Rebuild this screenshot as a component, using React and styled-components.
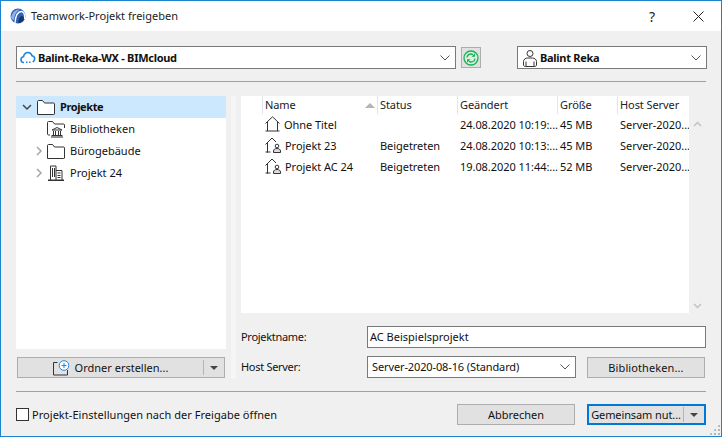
import React from 'react';
import styled, { createGlobalStyle } from 'styled-components';

const Global = createGlobalStyle`
  html, body { margin: 0; padding: 0; background: #f0f0f0; }
  * { box-sizing: border-box; }
`;

const Dialog = styled.div`
  width: 722px; height: 437px; overflow: hidden; position: relative;
  border: 1px solid #1a84d0;
  background: #f0f0f0;
  font-family: "Noto Sans", "Open Sans", sans-serif;
  font-size: 11px; color: #111;
  display: flex; flex-direction: column;
`;
const TitleBar = styled.div`
  height: 30px; flex: none; background: #fff;
  display: flex; align-items: center; padding: 0 0 0 9px;
`;
const TitleText = styled.span`
  font-size: 11px; color: #222; margin-left: 5px; flex: 1; letter-spacing: .02px; padding-bottom: 2px;
`;
const HelpGlyph = styled.span`
  font-size: 14px; width: 46px; text-align: center; color: #222;
`;
const CloseBtn = styled.span`
  width: 46px; display: flex; justify-content: center;
`;
const Body = styled.div`
  flex: 1; padding: 15px 15px 0; display: flex; flex-direction: column; min-height: 0;
`;
const TopRow = styled.div`
  display: flex; height: 23px; flex: none;
`;
const Select = styled.div`
  width: ${p => p.$w}px; height: ${p => p.$h || 23}px; flex: none;
  background: #fff; border: 1px solid #7a7a7a;
  display: flex; align-items: center; padding: 0 5px 0 ${p => p.$pl || 3}px;
  gap: ${p => p.$gap || 2}px;
  font-weight: ${p => p.$bold ? 700 : 400};
  letter-spacing: ${p => p.$bold ? '-.28px' : '-.12px'};
  margin-left: ${p => p.$ml || 0}px;
`;
const SelectText = styled.span`
  flex: 1; white-space: nowrap; overflow: hidden; padding-bottom: 1px;
`;
const SyncBtn = styled.div`
  width: 20px; height: 21px; margin: 1px 0 0 5px; flex: none;
  background: #e1e1e1; border: 1px solid #adadad;
  display: flex; align-items: center; justify-content: center;
`;
const Separator = styled.div`
  height: 1px; flex: none; background: #a0a0a0; margin: ${p => p.$m};
`;
const Main = styled.div`
  display: flex; height: 296px; flex: none;
`;
const LeftCol = styled.div`
  width: 210px; flex: none; display: flex; flex-direction: column;
`;
const Splitter = styled.div`
  width: 15px; flex: none; height: 283px; padding: 0 5px;
`;
const SplitterStrip = styled.div`
  height: 100%; background: #f5f5f5;
`;
const Tree = styled.div`
  height: 253px; flex: none; background: #fff;
`;
const TreeRow = styled.div`
  height: 22px; display: flex; align-items: center;
  background: ${p => p.$sel ? '#cce8ff' : 'transparent'};
  font-weight: ${p => p.$sel ? 700 : 400};
  letter-spacing: ${p => p.$sel ? '-.4px' : '0'};
  padding-left: ${p => p.$pl}px;
`;
const TreeLabel = styled.span`
  padding-bottom: 2px;
`;
const TreeIcon = styled.span`
  display: flex; margin-right: ${p => p.$mr || 5}px; flex: none;
`;
const Twisty = styled.span`
  display: flex; width: 12px; flex: none; margin-right: ${p => p.$mr || 2}px;
`;
const SplitButton = styled.div`
  height: 21px; flex: none; margin: ${p => p.$m || 0}; width: ${p => p.$w}px;
  background: #e1e1e1;
  border: ${p => p.$focus ? '2px solid #0078d7' : '1px solid #adadad'};
  display: flex; align-items: center; justify-content: center;
`;
const BtnMain = styled.span`
  flex: 1; display: flex; align-items: center; justify-content: center; gap: 5px;
  white-space: nowrap; letter-spacing: ${p => p.$ls || 0}px;
`;
const BtnArrowPart = styled.span`
  width: ${p => p.$w}px; flex: none; height: 15px; border-left: 1px solid #b5b5b5;
  display: flex; align-items: center; justify-content: center;
`;
const Triangle = styled.span`
  width: 0; height: 0; border-left: 4px solid transparent; border-right: 4px solid transparent;
  border-top: 4px solid #444;
`;
const RightCol = styled.div`
  flex: 1; display: flex; flex-direction: column; min-width: 0;
`;
const ListWrap = styled.div`
  height: 217px; flex: none; display: flex; background: #fff;
`;
const ListTable = styled.div`
  flex: 1; min-width: 0;
`;
const Cols = styled.div`
  display: grid; grid-template-columns: 21px 115px 80px 100px 60px 71px;
`;
const HeaderRow = styled(Cols)`
  height: 19px; align-items: stretch; padding-bottom: 1px;
`;
const Head = styled.div`
  border-left: ${p => p.$first ? '0' : '1px solid #e5e5e5'};
  padding: 0 0 2px 2px; display: flex; justify-content: space-between; align-items: center;
  white-space: nowrap; color: #222; letter-spacing: -.08px;
`;
const Row = styled(Cols)`
  height: 21px; align-items: center; white-space: nowrap;
`;
const Cell = styled.div`
  padding: 0 0 3px 3px; white-space: nowrap; display: flex; align-items: center; gap: 4px;
  letter-spacing: -.05px;
`;
const SortMark = styled.span`
  width: 0; height: 0; margin: 2px 2px 0 0;
  border-left: 5px solid transparent; border-right: 5px solid transparent;
  border-bottom: 5px solid #b4b4b4;
`;
const Scroll = styled.div`
  width: 17px; flex: none; background: #f0f0f0;
  display: flex; flex-direction: column; justify-content: space-between; align-items: center;
  padding: 25px 0 4px;
`;
const FormGrid = styled.div`
  margin-top: 13px; display: grid; grid-template-columns: 126px 209px 11px 118px; row-gap: 8px;
  align-items: center;
`;
const Label = styled.span`
  letter-spacing: -.3px; padding-bottom: 1px;
`;
const TextInput = styled.div`
  grid-column: 2 / span 3; height: 22px; background: #fff; border: 1px solid #7a7a7a;
  padding-left: 2px; line-height: 19px;
  margin-right: -1px;
`;
const Footer = styled.div`
  display: flex; align-items: center; margin-top: 12px; height: 21px;
`;
const Check = styled.span`
  width: 13px; height: 13px; background: #fff; border: 1px solid #333; flex: none; margin-right: 3px;
`;
const CheckLabel = styled.span`
  flex: 1; letter-spacing: .04px;
`;
const Grip = styled.div`
  position: absolute; right: 1px; bottom: 1px; width: 11px; height: 11px;
  background-image: radial-gradient(#b5b5b5 1px, transparent 1px);
  background-size: 4px 4px;
  clip-path: polygon(100% 0, 100% 100%, 0 100%);
`;

const Logo = () => (
  <svg width="16" height="16" viewBox="0 0 16 16">
    <circle cx="8" cy="8" r="7.500" fill="#2f62b8" />
    <path d="M1 9.500C2 4 6 1 10 1.500 7 3 4.500 6 4 12c-1.500 0-2.500-1-3-2.500z" fill="#8fb2e4" />
    <path d="M5 15C5.500 8 8 3.500 11.500 3.500 14 3.500 15 7 14.500 11" stroke="#fff" strokeWidth="1.300" fill="none" />
    <path d="M8 15c.5-4 2-7 4-7 1 0 2 1 2 3-1 2-3 4-6 4z" fill="#17366f" />
  </svg>
);
const X = () => (
  <svg width="11" height="11" viewBox="0 0 11 11"><path d="M.5.5l10 10M10.500.5l-10 10" stroke="#222" fill="none" /></svg>
);
const Chevron = () => (
  <svg width="10" height="6" viewBox="0 0 10 6" style={{ flex: 'none' }}><path d="M.5.5L5 5 9.500.5" stroke="#555" fill="none" /></svg>
);
const Cloud = () => (
  <svg width="16" height="13" viewBox="0 0 16 13"><path d="M4 11.500H3.500C1.800 11.500 1 10 1 8.500 1 7 2 6 3.500 5.800 4 3 6 1.500 8 1.500c2 0 3.500 1.500 4 3.300 1.500.2 2.700 1.400 2.700 3 0 1.500-.8 2.700-2 3.200" stroke="#1e87e6" strokeWidth="1.600" fill="none" /><rect x="6" y="10.500" width="1.500" height="1.500" fill="#1e87e6" /><rect x="9" y="10.500" width="1.500" height="1.500" fill="#1e87e6" /></svg>
);
const Sync = () => (
  <svg width="16" height="16" viewBox="0 0 16 16"><circle cx="8" cy="8" r="7" stroke="#17b25a" strokeWidth="1.300" fill="#dff0df" /><path d="M4 7.500c.3-2 2-3.500 4-3.500 .8 0 1.400.2 2 .6M12 8.500c-.3 2-2 3.500-4 3.500-.8 0-1.400-.2-2-.6" stroke="#17b25a" strokeWidth="1.300" fill="none" /><path d="M8.500 6.800h3.500V3.300zM7.500 9.200H4v3.500z" fill="#17b25a" /></svg>
);
const User = () => (
  <svg width="14" height="18" viewBox="0 0 14 18"><circle cx="7" cy="4.500" r="3" stroke="#333" fill="none" /><path d="M2.500 17.500c-1 0-2-.5-2-1.500v-3.500c0-2 2-3.500 4-3.500h5c2 0 4 1.500 4 3.500V16c0 1-1 1.500-2 1.500zM3 12.500v5M11 12.500v5" stroke="#333" fill="none" /></svg>
);
const Folder = () => (
  <svg width="18" height="15" viewBox="0 0 18 15"><path d="M.5 14.500V1.500c0-.5.300-1 1-1h4l2 2.500h9c.6 0 1 .4 1 1v10c0 .5-.4.5-1 .5z" stroke="#333" fill="#fff" /></svg>
);
const LibFolder = () => (
  <svg width="18" height="17" viewBox="0 0 18 17"><path d="M.5 13V1.500c0-.5.300-1 1-1h4l2 2.500h9c.6 0 1 .4 1 1v3M.5 13c0 .8.500 1 1.500 1h1" stroke="#333" fill="none" /><path d="M5 9l5-2.500L15 9zM6.500 10v4M8.500 10v4M11.500 10v4M13.500 10v4M4.500 14.500h11" stroke="#333" fill="none" /><path d="M4 15.500h12v1H4z" fill="#222" /></svg>
);
const Building = () => (
  <svg width="16" height="16" viewBox="0 0 16 16"><path d="M2.500 15V1h5.500v14M8 5.500h6V15" stroke="#333" fill="none" /><path d="M0 14.500h16V16H0z" fill="#333" /><path d="M4 3h1v9H4zM6 3h1v9H6zM9.500 7.500h3v1h-3zM9.500 10h3v1h-3zM9.500 12h3v1h-3z" fill="#333" /></svg>
);
const Twist = ({ open }) => open
  ? <svg width="10" height="7" viewBox="0 0 10 7"><path d="M1 1l4 4 4-4" stroke="#444" strokeWidth="1.500" fill="none" /></svg>
  : <svg width="7" height="10" viewBox="0 0 7 10" style={{ marginLeft: 2 }}><path d="M1 1l4 4-4 4" stroke="#a6a6a6" strokeWidth="1.500" fill="none" /></svg>;
const House = () => (
  <svg width="15" height="16" viewBox="0 0 15 16"><path d="M.5 7.500L7.500 .8l7 6.700M2.500 6v9M12.500 6v9M.5 15h14" stroke="#333" fill="none" /></svg>
);
const SharedHouse = () => (
  <svg width="16" height="16" viewBox="0 0 16 16"><path d="M.5 7.500L7 1l4 4M2.500 6v9.500M.5 15h5" stroke="#333" fill="none" /><circle cx="12" cy="9" r="1.800" stroke="#333" fill="none" /><path d="M8.500 15.500v-1.500c0-1.500 1.500-2.500 3.500-2.500s3.500 1 3.500 2.500v1.500z" stroke="#333" fill="#ddd" /></svg>
);
const NewFolder = () => (
  <svg width="17" height="16" viewBox="0 0 17 16"><path d="M.5 15V2.500h4M.5 15h14V10" stroke="#333" fill="none" /><circle cx="11" cy="5.500" r="4.800" stroke="#1e87e6" fill="#fff" /><path d="M11 3v5M8.500 5.500h5" stroke="#1e87e6" /></svg>
);
const ChevUp = () => (
  <svg width="9" height="6" viewBox="0 0 9 6"><path d="M1 5l3.500-3.500L8 5" stroke="#c2c2c2" strokeWidth="1.500" fill="none" /></svg>
);
const ChevDown = () => (
  <svg width="9" height="6" viewBox="0 0 9 6"><path d="M1 1l3.500 3.500L8 1" stroke="#c2c2c2" strokeWidth="1.500" fill="none" /></svg>
);

const rows = [
  { icon: <House />, name: 'Ohne Titel', status: '', date: '24.08.2020 10:19:...', size: '45 MB' },
  { icon: <SharedHouse />, name: 'Projekt 23', status: 'Beigetreten', date: '24.08.2020 10:13:...', size: '45 MB' },
  { icon: <SharedHouse />, name: 'Projekt AC 24', status: 'Beigetreten', date: '19.08.2020 11:44:...', size: '52 MB' },
];

export default function App() {
  return (
    <Dialog>
      <Global />
      <TitleBar>
        <Logo />
        <TitleText>Teamwork-Projekt freigeben</TitleText>
        <HelpGlyph>?</HelpGlyph>
        <CloseBtn><X /></CloseBtn>
      </TitleBar>
      <Body>
        <TopRow>
          <Select $w={440} $bold><Cloud /><SelectText>Balint-Reka-WX - BIMcloud</SelectText><Chevron /></Select>
          <SyncBtn><Sync /></SyncBtn>
          <Select $w={190} $ml={36} $bold $pl={5} $gap={3}><User /><SelectText>Balint Reka</SelectText><Chevron /></Select>
        </TopRow>
        <Separator $m="12px 0 14px" />
        <Main>
          <LeftCol>
            <Tree>
              <TreeRow $sel $pl={6}>
                <Twisty $mr={3}><Twist open /></Twisty>
                <TreeIcon $mr={5}><Folder /></TreeIcon><TreeLabel>Projekte</TreeLabel>
              </TreeRow>
              <TreeRow $pl={31}><TreeIcon><LibFolder /></TreeIcon><TreeLabel>Bibliotheken</TreeLabel></TreeRow>
              <TreeRow $pl={18}><Twisty $mr={1}><Twist /></Twisty><TreeIcon><Folder /></TreeIcon><TreeLabel>Bürogebäude</TreeLabel></TreeRow>
              <TreeRow $pl={18}><Twisty $mr={2}><Twist /></Twisty><TreeIcon $mr={6}><Building /></TreeIcon><TreeLabel>Projekt 24</TreeLabel></TreeRow>
            </Tree>
            <SplitButton $w={208} $m="8px 0 0 1px">
              <BtnMain><NewFolder />Ordner erstellen...</BtnMain>
              <BtnArrowPart $w={21}><Triangle /></BtnArrowPart>
            </SplitButton>
          </LeftCol>
          <Splitter><SplitterStrip /></Splitter>
          <RightCol>
            <ListWrap>
              <ListTable>
                <HeaderRow>
                  <Head $first />
                  <Head>Name<SortMark /></Head>
                  <Head>Status</Head>
                  <Head>Geändert</Head>
                  <Head>Größe</Head>
                  <Head>Host Server</Head>
                </HeaderRow>
                {rows.map(r => (
                  <Row key={r.name}>
                    <span />
                    <Cell>{r.icon}{r.name}</Cell>
                    <Cell>{r.status}</Cell>
                    <Cell>{r.date}</Cell>
                    <Cell>{r.size}</Cell>
                    <Cell>Server-2020...</Cell>
                  </Row>
                ))}
              </ListTable>
              <Scroll><ChevUp /><ChevDown /></Scroll>
            </ListWrap>
            <FormGrid>
              <Label>Projektname:</Label>
              <TextInput>AC Beispielsprojekt</TextInput>
              <Label>Host Server:</Label>
              <Select $w={209} $h={22} $pl={4}><SelectText>Server-2020-08-16 (Standard)</SelectText><Chevron /></Select>
              <span />
              <SplitButton $w={118}><BtnMain $ls={.1}>Bibliotheken...</BtnMain></SplitButton>
            </FormGrid>
          </RightCol>
        </Main>
        <Separator $m="-1px 0 0" />
        <Footer>
          <Check /><CheckLabel>Projekt-Einstellungen nach der Freigabe öffnen</CheckLabel>
          <SplitButton $w={118}><BtnMain>Abbrechen</BtnMain></SplitButton>
          <SplitButton $w={119} $m="0 0 0 12px" $focus><BtnMain $ls={-.1}>Gemeinsam nut...</BtnMain><BtnArrowPart $w={21}><Triangle /></BtnArrowPart></SplitButton>
        </Footer>
      </Body>
      <Grip />
    </Dialog>
  );
}
